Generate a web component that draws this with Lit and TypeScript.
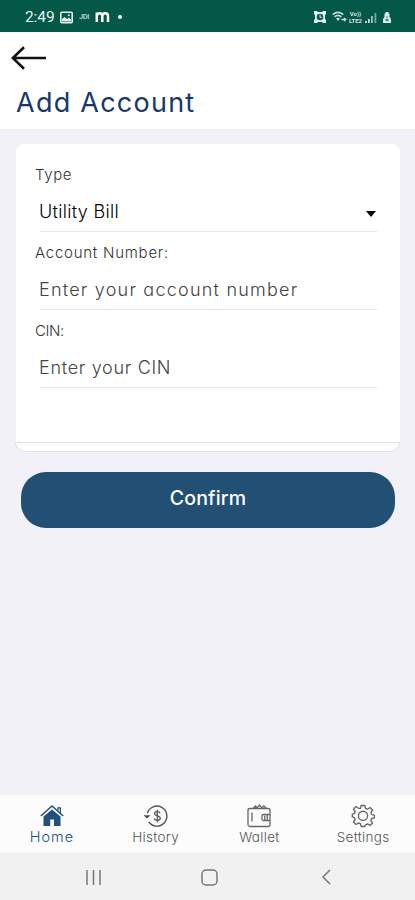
import { LitElement, html, css, svg } from "lit";
import { customElement } from "lit/decorators.js";

const alarm = svg`<svg width="14" height="14" viewBox="0 0 14 14"><path d="M1 1h3l1 1h4l1-1h3v3l-1 1v4l1 1v3h-3l-1-1H5l-1 1H1v-3l1-1V5L1 4z" fill="#e4f1ee"/><circle cx="7" cy="7" r="3.3" fill="#0b5c4e"/><path d="M7 4.800V7.300H8.800" stroke="#e4f1ee" fill="none"/></svg>`;
const wifi = svg`<svg width="15" height="12" viewBox="0 0 15 12" fill="none" stroke="#c5ddd7" stroke-width="1.600"><path d="M.7 3.600Q6 -.8 11.300 3.600M2.600 5.900Q6 3 9.400 5.900"/><path d="M4 7.300Q6 6 8 7.300L6 10z" fill="#c5ddd7" stroke="none"/><path d="M9.500 8.500h4M12 7l1.800 1.500L12 10" stroke-width="1.400"/></svg>`;
const signal = svg`<svg width="13" height="13" viewBox="0 0 13 13" fill="#c5ddd7"><rect x="0" y="10" width="1.800" height="2"/><rect x="3" y="8" width="1.800" height="4"/><rect x="6" y="5" width="1.800" height="7" opacity=".8"/><rect x="9.500" y="2" width="1.800" height="10" opacity=".6"/></svg>`;
const battery = svg`<svg width="10" height="13" viewBox="0 0 10 13"><path d="M3.500 1h3v1.500h1V6L9 8v4H1V8l1.500-2V2.500h1z" fill="#dcebe8"/><path d="M5 5v2.500M3.800 8.500h2.400v1.200H3.800z" stroke="#0b5c4e" stroke-width=".7" fill="none"/></svg>`;
const photo = svg`<svg width="13" height="13" viewBox="0 0 13 13"><rect x=".8" y="1.200" width="11.400" height="10.600" rx="1" fill="none" stroke="#e4f1ee" stroke-width="1.600"/><path d="M2 10.500V8l2.500-2L7 8l2-1.500 2 2v2z" fill="#e4f1ee"/><circle cx="8.800" cy="4.200" r="1" fill="#e4f1ee"/></svg>`;
const mLogo = svg`<svg width="15" height="12" viewBox="0 0 15 12" fill="none" stroke="#fff" stroke-width="2.500"><path d="M1.800 11V1.500M1.800 5C1.800 1.300 7.300 1.300 7.300 5V11M7.300 5C7.300 1.300 13 1.300 13 5V11"/></svg>`;
const back = svg`<svg width="36" height="24" viewBox="0 0 36 24" fill="none" stroke="#111" stroke-width="2.600"><path d="M13 1.200 1.800 12 13 22.800M1.800 12H35"/></svg>`;
const home = svg`<svg width="24" height="24" viewBox="0 0 24 24"><path d="M3.500 12.500 12 5.500l8.500 7V22H14v-6.500h-3.800V22H3.500z" fill="#20507c"/><path d="M.8 12 12 2l11.200 10" fill="none" stroke="#20507c" stroke-width="1.500"/><path d="M18 6.500V3.900h2.400V9" fill="none" stroke="#20507c" stroke-width="1.300"/></svg>`;
const history = svg`<svg width="26" height="24" viewBox="0 0 26 24" fill="none" stroke="#555" stroke-width="1.400"><path d="M4.300 9.200A10 10 0 1 1 5.800 18"/><path d="M.6 11.200h6.800L4 14.500z" fill="#444" stroke="none"/><path d="M17 9.200C16.300 7 11.400 7.200 11.600 9.900 11.800 12.500 17.300 11.300 17.300 14.300 17.200 17 11.800 17.100 11.200 14.500M14.300 5.800v12.500" stroke-width="1.200"/></svg>`;
const wallet = svg`<svg width="24" height="24" viewBox="0 0 24 24" fill="none" stroke="#666" stroke-width="1.300"><rect x="1" y="4.500" width="22" height="18" rx="2"/><path d="M6 4.500 8.500 2 10.500 4.500M9.500 4.500l3-3.500 3 3.500M14.500 4.500l2.300-2.500 2.700 2.500M5 8.500v9M23 10.500h-6.500c-1 0-1.500.7-1.500 1.500v3c0 1 .5 1.500 1.500 1.500H23"/><path d="M17.800 11.500v4.500M20.300 11v5"/></svg>`;
const gear = svg`<svg width="24" height="24" viewBox="-.3 -.6 24.600 25.200" fill="none" stroke="#666" stroke-width="1.400"><path stroke-linejoin="round" d="M10 1h4l.6 3 2.200.9 2.500-1.800 2.700 2.700-1.800 2.600.9 2.100 2.900.5v3l-2.900.6-.9 2.200 1.800 2.500-2.700 2.700-2.500-1.700-2.200.9L14 23h-4l-.6-2.800-2.200-.9L4.700 21 2 18.300l1.800-2.500-.9-2.200L.8 13v-3l2.100-.5.9-2.100L2 4.800l2.700-2.700 2.500 1.800L9.400 4z"/><circle cx="12" cy="11.800" r="4.800"/></svg>`;

@customElement("app-root")
export class AppRoot extends LitElement {
  static styles = css`
    :host { display: flex; flex-direction: column; height: 900px; width: 415px; background: #f1f1f7; font-family: Inter, sans-serif; font-feature-settings: "cv11"; font-weight: 300; color: #333; overflow: hidden; }
    * { box-sizing: border-box; }
    svg { display: block; flex: none; }
    .status { height: 32px; background: #035848; display: flex; align-items: center; padding: 2px 23px 0 25px; color: #e4f1ee; flex: none; }
    .clock { font: 400 15.500px/20px Roboto, sans-serif; width: 35px; letter-spacing: -.1px; }
    .jdi { font: 700 7.500px/10px Roboto, sans-serif; width: 11px; margin: 0 5px 0 6px; opacity: .75; letter-spacing: -.4px; }
    .dot { width: 4px; height: 4px; border-radius: 2px; background: #fff; margin-left: 8px; }
    .right { margin-left: auto; display: flex; align-items: center; }
    .alarm { margin-right: 5px; }
    .volte { display: flex; flex-direction: column; align-items: center; font: 700 6px/7px Roboto, sans-serif; width: 17px; margin-right: 1px; opacity: .9; }
    .battery { margin-left: 4px; }
    header { height: 97px; background: #fff; padding: 14px 0 0 11px; flex: none; }
    h1 { margin: 15px 0 0 5px; font-size: 27px; line-height: 36px; font-weight: 400; color: #18386b; letter-spacing: 1.250px; white-space: nowrap; }
    main { flex: 1; padding: 15px 15px 0; }
    .card { background: #fff; border-radius: 8px 8px 0 0; height: 298px; margin-left: 1px; padding: 20px 23px 0 20px; }
    .lip { height: 10px; border: 1px solid #e2e2e6; background: #fff; border-radius: 0 0 10px 10px; }
    .label { height: 22px; line-height: 22px; font-size: 15px; white-space: nowrap; color: #333; margin-left: -1px; }
    .input { height: 46px; margin-left: 4px; padding-top: 13px; border-bottom: 1px solid #e6e6e8; display: flex; justify-content: space-between; font-size: 18px; line-height: 26px; white-space: nowrap; color: #444; margin-bottom: 10px; }
    .input span { margin-left: -1px; }
    .chosen { color: #000; }
    .caret { width: 0; height: 0; border: 5.500px solid transparent; border-top: 6px solid #000; border-bottom: 0; margin: 12px 1px 0 0; }
    button { display: block; width: 374px; height: 56px; margin: 20px 0 0 6px; padding: 0 0 4px; border: 0; border-radius: 25px; background: #225075; color: #fff; font: 500 19.500px/26px Inter, sans-serif; font-feature-settings: inherit; letter-spacing: .2px; }
    nav { height: 58px; background: #fcfcfc; display: grid; grid-template-columns: repeat(4, 1fr); flex: none; }
    .tab { display: flex; flex-direction: column; align-items: center; padding-top: 9px; font-size: 13.500px; line-height: 18px; color: #555; white-space: nowrap; letter-spacing: .3px; }
    .on { color: #20507c; font-size: 14.500px; letter-spacing: 1px; }
    .sys { height: 47px; background: #f1f1f1; display: flex; align-items: center; padding: 1px 0 0 85px; flex: none; }
    .recent { margin-right: 99px; }
    .circle { margin-right: 103px; }
    .type { letter-spacing: .6px; }
    .bill { letter-spacing: .3px; }
    .number { letter-spacing: .75px; }
    .enter { letter-spacing: 1.220px; }
    .cin { letter-spacing: -.4px; }
    .entercin { letter-spacing: .7px; }
  `;

  render() {
    return html`
      <div class="status"><span class="clock">2:49</span>${photo}<span class="jdi">JDI</span>${mLogo}<i class="dot"></i>
        <div class="right"><span class="alarm">${alarm}</span>${wifi}<span class="volte"><span>Vo))</span><span>LTE2</span></span>${signal}<span class="battery">${battery}</span></div></div>
      <header>${back}<h1>Add Account</h1></header>
      <main>
        <div class="card">
          <div class="label type">Type</div>
          <div class="input chosen"><span class="bill">Utility Bill</span><i class="caret"></i></div>
          <div class="label number">Account Number:</div>
          <div class="input"><span class="enter">Enter your account number</span></div>
          <div class="label cin">CIN:</div>
          <div class="input"><span class="entercin">Enter your CIN</span></div>
        </div>
        <div class="lip"></div>
        <button>Confirm</button>
      </main>
      <nav>
        <div class="tab on">${home}<span>Home</span></div>
        <div class="tab">${history}<span>History</span></div>
        <div class="tab">${wallet}<span>Wallet</span></div>
        <div class="tab">${gear}<span>Settings</span></div>
      </nav>
      <div class="sys">
        <svg class="recent" width="17" height="17" viewBox="0 0 17 17" stroke="#777" stroke-width="1.500"><path d="M2 1v15M8.500 1v15M15 1v15"/></svg>
        <svg class="circle" width="17" height="17" viewBox="0 0 17 17" fill="none" stroke="#777" stroke-width="1.500"><rect x="1" y="1" width="15" height="15" rx="4"/></svg>
        <svg width="10" height="16" viewBox="0 0 10 16" fill="none" stroke="#777" stroke-width="1.500"><path d="M9 1 2 8l7 7"/></svg>
      </div>`;
  }
}
